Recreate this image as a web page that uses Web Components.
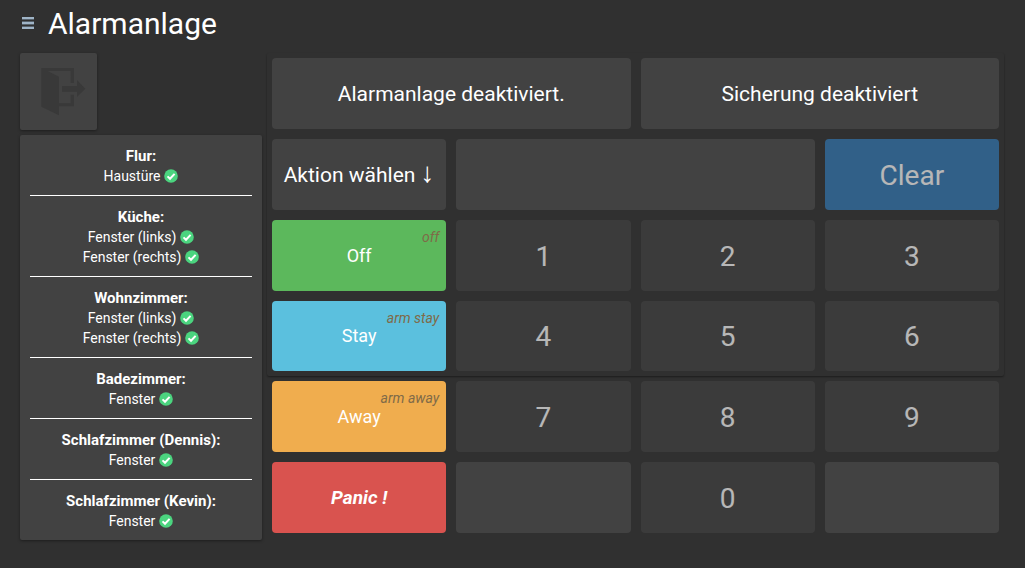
<!DOCTYPE html>
<html lang="de">
<head>
<meta charset="utf-8">
<meta name="viewport" content="width=device-width, initial-scale=1">
<title>Alarmanlage</title>
<style>
    body {
        margin: 0;
        background: #303030;
        color: #fff;
        font-family: Roboto, "Liberation Sans", sans-serif;
        font-size: 14px;
        line-height: 20px;
    }
    .arrow {
        font-family: "Liberation Serif", serif;
        font-size: 28px;
        line-height: 20px;
    }
</style>
</head>
<body>

<alarm-page>
    <page-header slot="header">Alarmanlage</page-header>

    <exit-button slot="side"></exit-button>
    <sensor-list slot="side">
        <sensor-room name="Flur:">
            <sensor-state>Haustüre</sensor-state>
        </sensor-room>
        <sensor-room name="Küche:">
            <sensor-state>Fenster (links)</sensor-state>
            <sensor-state>Fenster (rechts)</sensor-state>
        </sensor-room>
        <sensor-room name="Wohnzimmer:">
            <sensor-state>Fenster (links)</sensor-state>
            <sensor-state>Fenster (rechts)</sensor-state>
        </sensor-room>
        <sensor-room name="Badezimmer:">
            <sensor-state>Fenster</sensor-state>
        </sensor-room>
        <sensor-room name="Schlafzimmer (Dennis):">
            <sensor-state>Fenster</sensor-state>
        </sensor-room>
        <sensor-room name="Schlafzimmer (Kevin):">
            <sensor-state>Fenster</sensor-state>
        </sensor-room>
    </sensor-list>

    <key-pad>
        <info-tile wide>Alarmanlage deaktiviert.</info-tile>
        <info-tile wide>Sicherung deaktiviert</info-tile>

        <info-tile>Aktion wählen <span class="arrow">↓</span></info-tile>
        <code-field wide></code-field>
        <pad-key kind="clear" disabled>Clear</pad-key>

        <action-key kind="off" hint="off">Off</action-key>
        <pad-key disabled>1</pad-key>
        <pad-key disabled>2</pad-key>
        <pad-key disabled>3</pad-key>

        <action-key kind="stay" hint="arm stay">Stay</action-key>
        <pad-key disabled>4</pad-key>
        <pad-key disabled>5</pad-key>
        <pad-key disabled>6</pad-key>

        <action-key kind="away" hint="arm away">Away</action-key>
        <pad-key disabled>7</pad-key>
        <pad-key disabled>8</pad-key>
        <pad-key disabled>9</pad-key>

        <action-key kind="panic">Panic !</action-key>
        <info-tile></info-tile>
        <pad-key disabled>0</pad-key>
        <info-tile></info-tile>
    </key-pad>
</alarm-page>

<script>
class AlarmPage extends HTMLElement {
    constructor() {
        super();
        this.attachShadow({ mode: 'open' });
        this.shadowRoot.innerHTML = `
        <style>
        :host{
            display:block;
            padding:0 21px 27px 20px;
        }
        main{
            display:flex;
            gap:5px;
        }
        aside{
            display:flex;
            flex-direction:column;
            gap:5px;
            flex:0 0 calc(25% - 4px);
        }
        .content{
            display:flex;
            flex:1;
            min-width:0;
        }
        </style>
        <slot name="header"></slot>
        <main>
            <aside><slot name="side"></slot></aside>
            <div class="content"><slot></slot></div>
        </main>
        `
    }
}

class PageHeader extends HTMLElement {
    constructor() {
        super();
        this.attachShadow({ mode: 'open' });
        this.shadowRoot.innerHTML = `
        <style>
        :host{
            display:block;
        }
        header{
            display:flex;
            align-items:center;
            gap:14px;
            padding:4px 0 9px 2px;
        }
        button{
            display:block;
            padding:0 0 2px;
            border:0;
            background:none;
            color:#9fb4c7;
            cursor:pointer;
        }
        svg{
            display:block;
        }
        h1{
            margin:0;
            font-size:30px;
            line-height:40px;
            font-weight:400;
        }
        </style>
        <header>
            <button type="button" aria-label="Menü">
                <svg width="12" height="13" viewBox="0 0 12 13">
                    <path fill="#56616b" d="M0 2h12v1H0zM0 4h12v1H0zM0 7h12v1H0zM0 9h12v1H0z"/>
                    <path fill="currentColor" d="M0 0h12v2H0zM0 5h12v2H0zM0 10h12v2H0z"/>
                </svg>
            </button>
            <h1><slot></slot></h1>
        </header>
        `
    }
}

class ExitButton extends HTMLElement {
    constructor() {
        super();
        this.attachShadow({ mode: 'open' });
        this.shadowRoot.innerHTML = `
        <style>
        :host{
            display:block;
        }
        button{
            display:block;
            padding:0;
            border:0;
            border-radius:2px;
            background:#424242;
            color:#393939;
            box-shadow:0 1px 3px rgba(0,0,0,0.4);
            cursor:pointer;
        }
        svg{
            display:block;
        }
        </style>
        <button type="button" aria-label="Verlassen">
            <svg width="77" height="77" viewBox="0 0 231 231" fill="currentColor">
                <path d="M64 45H162V90H152V54H83L117 71V151H152V125H162V160H117V187L64 161Z"/>
                <path d="M126 99H171V81L196 107L171 132V116H126Z"/>
            </svg>
        </button>
        `
    }
}

class SensorList extends HTMLElement {
    constructor() {
        super();
        this.attachShadow({ mode: 'open' });
        this.shadowRoot.innerHTML = `
        <style>
        :host{
            display:block;
            padding:0 10px;
            border-radius:2px;
            background:#424242;
            box-shadow:0 1px 3px rgba(0,0,0,0.4);
            text-align:center;
        }
        ::slotted(sensor-room:not(:first-child)){
            border-top:1px solid #fff;
        }
        </style>
        <slot></slot>
        `
    }
}

class SensorRoom extends HTMLElement {
    constructor() {
        super();
        this.attachShadow({ mode: 'open' });
        this.shadowRoot.innerHTML = `
        <style>
        :host{
            display:block;
            padding:11px 0 9px;
        }
        h2{
            margin:0;
            font-size:15px;
            line-height:20px;
            font-weight:700;
        }
        </style>
        <h2></h2>
        <slot></slot>
        `
    }
    connectedCallback() {
        this.shadowRoot.querySelector('h2').textContent = this.getAttribute('name');
    }
}

class SensorState extends HTMLElement {
    constructor() {
        super();
        this.attachShadow({ mode: 'open' });
        this.shadowRoot.innerHTML = `
        <style>
        :host{
            display:flex;
            justify-content:center;
            align-items:center;
            gap:4px;
        }
        svg{
            margin-bottom:1px;
        }
        </style>
        <span><slot></slot></span>
        <svg width="14" height="14" viewBox="0 0 14 14" role="img" aria-label="geschlossen">
            <circle cx="7" cy="7" r="6.8" fill="#4bd47f"/>
            <path d="M3.5 7.4L6 9.8L10.6 4.9" fill="none" stroke="#fff" stroke-width="2"/>
        </svg>
        `
    }
}

class KeyPad extends HTMLElement {
    constructor() {
        super();
        this.attachShadow({ mode: 'open' });
        this.shadowRoot.innerHTML = `
        <style>
        :host{
            display:grid;
            flex:1;
            position:relative;
            z-index:0;
            grid-template-columns:repeat(4,minmax(0,1fr));
            grid-auto-rows:minmax(60px,1fr);
            gap:10px;
            padding:5px 5px 7px;
        }
        /* card behind the first four rows */
        .card{
            position:absolute;
            grid-area:1 / 1 / 5 / 5;
            inset:-5px;
            z-index:-1;
            border-radius:2px;
            box-shadow:0 1px 2px rgba(0,0,0,0.4);
        }
        ::slotted([wide]){
            grid-column:span 2;
        }
        </style>
        <div class="card"></div>
        <slot></slot>
        `
    }
}

class InfoTile extends HTMLElement {
    constructor() {
        super();
        this.attachShadow({ mode: 'open' });
        this.shadowRoot.innerHTML = `
        <style>
        :host{
            display:flex;
            align-items:center;
            justify-content:center;
            padding-top:2px;
            border-radius:4px;
            background:#424242;
            font-size:21px;
            line-height:30px;
            white-space:nowrap;
        }
        </style>
        <span><slot></slot></span>
        `
    }
}

class CodeField extends HTMLElement {
    constructor() {
        super();
        this.attachShadow({ mode: 'open' });
        this.shadowRoot.innerHTML = `
        <style>
        :host{
            display:flex;
        }
        input{
            flex:1;
            min-width:0;
            padding:0 10px;
            border:0;
            border-radius:4px;
            background:#424242;
            color:#fff;
            font:inherit;
            font-size:28px;
            text-align:center;
        }
        </style>
        <input type="password" aria-label="Code" readonly>
        `
    }
}

class PadKey extends HTMLElement {
    constructor() {
        super();
        this.attachShadow({ mode: 'open' });
        this.shadowRoot.innerHTML = `
        <style>
        :host{
            display:flex;
        }
        button{
            flex:1;
            padding:3px 0 0;
            border:0;
            border-radius:4px;
            background:#424242;
            color:#fff;
            font:inherit;
            font-size:28px;
            line-height:40px;
            cursor:pointer;
        }
        :host([kind="clear"]) button{
            background:#337ab7;
        }
        button:disabled{
            opacity:0.65;
            cursor:not-allowed;
        }
        </style>
        <button type="button"><slot></slot></button>
        `
    }
    connectedCallback() {
        this.shadowRoot.querySelector('button').disabled = this.hasAttribute('disabled');
    }
}

class ActionKey extends HTMLElement {
    constructor() {
        super();
        this.attachShadow({ mode: 'open' });
        this.shadowRoot.innerHTML = `
        <style>
        :host{
            display:flex;
        }
        button{
            position:relative;
            flex:1;
            padding:1px 0 0;
            border:0;
            border-radius:4px;
            color:#fff;
            font:inherit;
            font-size:18px;
            line-height:24px;
            cursor:pointer;
        }
        .hint{
            position:absolute;
            top:7px;
            right:7px;
            color:#7f6a48;
            font-size:14px;
            line-height:20px;
            font-style:italic;
        }
        :host([kind="off"]) button{
            background:#5cb85c;
        }
        :host([kind="stay"]) button{
            background:#5bc0de;
        }
        :host([kind="away"]) button{
            background:#f0ad4e;
        }
        :host([kind="panic"]) button{
            background:#d9534f;
            font-size:19px;
            font-weight:700;
            font-style:italic;
        }
        </style>
        <button type="button"><slot></slot></button>
        `
    }
    connectedCallback() {
        const hint = this.getAttribute('hint');
        if (!hint || this.shadowRoot.querySelector('.hint')) return;
        const span = document.createElement('span');
        span.className = 'hint';
        span.textContent = hint;
        this.shadowRoot.querySelector('button').append(span);
    }
}

customElements.define('alarm-page', AlarmPage);
customElements.define('page-header', PageHeader);
customElements.define('exit-button', ExitButton);
customElements.define('sensor-list', SensorList);
customElements.define('sensor-room', SensorRoom);
customElements.define('sensor-state', SensorState);
customElements.define('key-pad', KeyPad);
customElements.define('info-tile', InfoTile);
customElements.define('code-field', CodeField);
customElements.define('pad-key', PadKey);
customElements.define('action-key', ActionKey);
</script>
</body>
</html>
